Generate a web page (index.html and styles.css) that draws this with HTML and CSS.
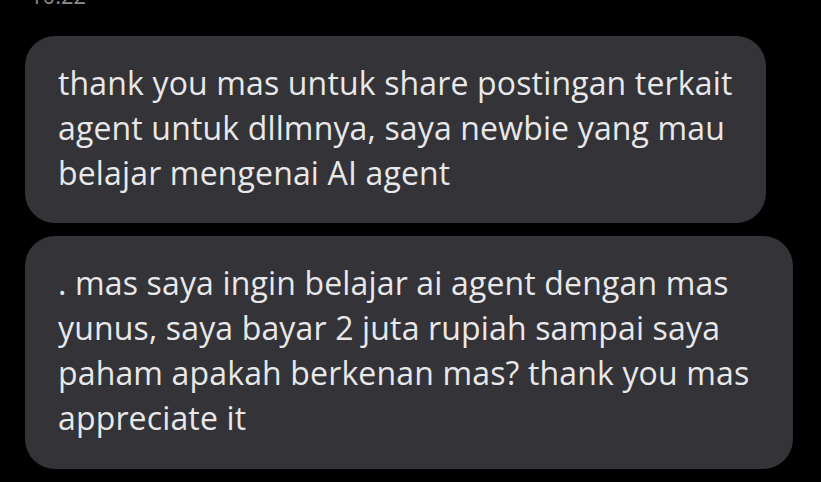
FILE: index.html
```html
<!DOCTYPE html>
<html lang="id">
<head>
    <meta charset="UTF-8">
    <meta name="viewport" content="width=device-width, initial-scale=1.0">
    <title>Pesan</title>
    <link rel="stylesheet" href="styles.css">
</head>
<body>
    <div class="chat">
        <div class="timestamp">10:22</div>

        <div class="bubble">
            thank you mas untuk share postingan terkait<br>
            agent untuk dllmnya, saya newbie yang mau<br>
            belajar mengenai AI agent
        </div>

        <div class="bubble bubble-wide">
            . mas saya ingin belajar ai agent dengan mas<br>
            yunus, saya bayar 2 juta rupiah sampai saya<br>
            paham apakah berkenan mas? thank you mas<br>
            appreciate it
        </div>
    </div>
</body>
</html>
```

FILE: styles.css
```css
:root {
    --bg: #000000;
    --bubble: #333338;
    --text: #e8e8ea;
    --muted: #8b8d91;
}

* {
    box-sizing: border-box;
}

body {
    margin: 0;
    background: var(--bg);
    font-family: 'Open Sans', 'Noto Sans', sans-serif;
    color: var(--text);
    overflow: hidden;
}

.chat {
    display: flex;
    flex-direction: column;
    align-items: flex-start;
    gap: 13px;
    padding: 0 0 0 25px;
}

.timestamp {
    color: var(--muted);
    font-size: 22px;
    line-height: 22px;
    margin-top: -16px;
    margin-left: 5px;
    margin-bottom: 17px;
}

.bubble {
    width: fit-content;
    background: var(--bubble);
    border-radius: 30px;
    padding: 24px 34px 28px 33px;
    font-size: 32px;
    line-height: 45px;
    letter-spacing: 0.15px;
}

.bubble-wide {
    width: 768px;
    padding-bottom: 29px;
}
```
